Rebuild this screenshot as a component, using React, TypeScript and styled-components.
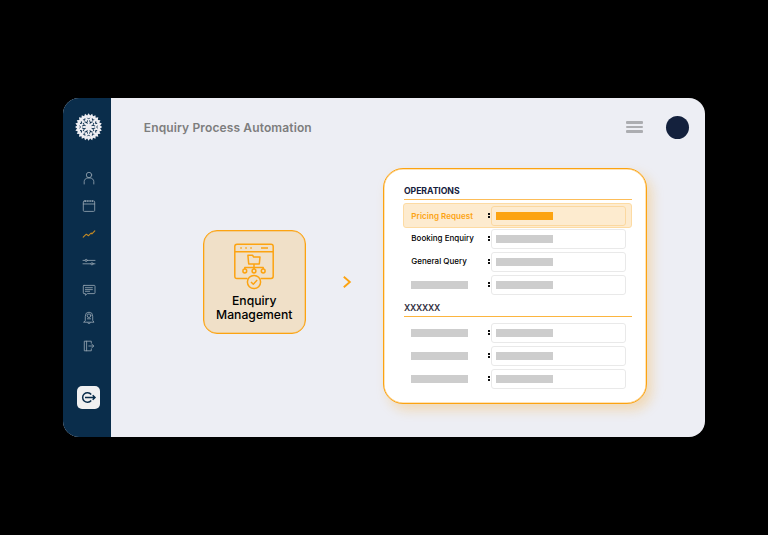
import React from "react";
import styled, { createGlobalStyle, css } from "styled-components";

const ORANGE = "#fca311";
const NAVY = "#14213d";

const GlobalStyle = createGlobalStyle`
  * { box-sizing: border-box; }
  body { margin: 0; background: #000; font-family: Inter, "Liberation Sans", sans-serif; }
`;

const Page = styled.main`
  width: 768px;
  height: 535px;
  padding: 98px 63px;
  background: #000;
`;

const Window = styled.div`
  display: flex;
  width: 642px;
  height: 339px;
  border-radius: 16px;
  overflow: hidden;
  background: #edeef4;
`;

const Sidebar = styled.nav`
  display: flex;
  flex-direction: column;
  align-items: center;
  width: 48.4px;
  padding: 15px 0 0 3px;
  background: #0a2d4b;
  flex-shrink: 0;
`;

const Logo = styled.svg`
  width: 28px;
  height: 28px;
  flex-shrink: 0;
`;

const NavList = styled.div`
  display: flex;
  flex-direction: column;
  gap: 14px;
  margin-top: 30px;
`;

const NavIcon = styled.svg<{ $active?: boolean }>`
  display: block;
  width: 14px;
  height: 14px;
  fill: none;
  stroke: ${(p) => (p.$active ? "#c48a24" : "#93a3b0")};
  stroke-width: 0.85;
  stroke-linecap: round;
  stroke-linejoin: round;
`;

const ExitButton = styled.button`
  display: grid;
  place-items: center;
  width: 23px;
  height: 23px;
  margin: 33px 1px 0 0;
  padding: 0;
  border: 0;
  border-radius: 5px;
  background: #f0f0f1;
`;

const Main = styled.div`
  flex: 1;
  display: flex;
  flex-direction: column;
`;

const Header = styled.header`
  display: flex;
  align-items: center;
  height: 58px;
  padding: 0 16.4px 0 32.4px;
`;

const Title = styled.h1`
  flex: 1;
  margin: 0;
  padding-top: 1px;
  font-size: 12px;
  line-height: 16px;
  font-weight: 600;
  letter-spacing: 0.13px;
  color: #7d7d7d;
`;

const Menu = styled.div`
  display: flex;
  flex-direction: column;
  gap: 2px;
  width: 17px;
  margin-right: 22.5px;
`;

const MenuBar = styled.span`
  height: 2.5px;
  border-radius: 1px;
  background: #acadb1;
`;

const Avatar = styled.div`
  width: 23px;
  height: 23px;
  border-radius: 50%;
  background: ${NAVY};
`;

const Flow = styled.section`
  display: flex;
  align-items: flex-start;
  padding: 12px 0 0 91.4px;
`;

const ProcessCard = styled.div`
  display: flex;
  flex-direction: column;
  align-items: center;
  width: 103px;
  height: 104px;
  margin-top: 62px;
  padding-top: 11px;
  border: 1px solid ${ORANGE};
  border-radius: 14px;
  background: #f0e0c8;
  box-shadow: inset 0 0 0 0.5px rgba(252, 163, 17, 0.6);
`;

const ProcessLabel = styled.div`
  margin-top: 4px;
  font-size: 12.2px;
  line-height: 14px;
  font-weight: 500;
  text-align: center;
  color: #000;
`;

const Arrow = styled.svg`
  width: 10px;
  height: 14px;
  margin: 107px 31px 0 36px;
  fill: none;
  stroke: ${ORANGE};
  stroke-width: 1.9;
`;

const Panel = styled.div`
  width: 264px;
  height: 236px;
  padding: 17px 14.2px 0 19.2px;
  border: 1px solid ${ORANGE};
  border-radius: 20px;
  background: #fff;
  box-shadow: inset 0 0 0 0.5px rgba(252, 163, 17, 0.6), 5px 6px 12px rgba(252, 163, 17, 0.27);
`;

const GroupTitle = styled.h2<{ $muted?: boolean }>`
  width: 228px;
  height: 14px;
  margin: ${(p) => (p.$muted ? "7px" : "0")} 0 0 1px;
  border-bottom: 1px solid ${(p) => (p.$muted ? "#fcb53f" : "#fdbd58")};
  font-size: 8.7px;
  line-height: 11px;
  font-weight: ${(p) => (p.$muted ? 600 : 700)};
  letter-spacing: ${(p) => (p.$muted ? "-0.25px" : "-0.07px")};
  color: ${(p) => (p.$muted ? "#303040" : NAVY)};
`;

const Rows = styled.div`
  padding-top: 4px;
`;

const Field = styled.div`
  display: flex;
  align-items: center;
  width: 135px;
  height: 20px;
  padding-left: 4.2px;
  border: 1px solid #e9e9e9;
  border-radius: 3px;
`;

const Bar = styled.span<{ $active?: boolean }>`
  display: block;
  width: 57px;
  height: 8px;
  background: ${(p) => (p.$active ? ORANGE : "#cdcdcd")};
`;

const Label = styled.div<{ $text?: boolean }>`
  width: 76.7px;
  padding-left: ${(p) => (p.$text ? "0.4px" : "0")};
  padding-bottom: ${(p) => (p.$text ? "2px" : "0")};
  font-size: 8px;
  line-height: 12px;
  font-weight: 500;
  color: #000;
  white-space: nowrap;
`;

const Colon = styled.span`
  display: flex;
  flex-direction: column;
  gap: 1.4px;
  width: 3.3px;
  &::before, &::after {
    content: "";
    width: 2px;
    height: 1.8px;
    background: #111;
  }
`;

const Row = styled.div<{ $active?: boolean }>`
  display: flex;
  align-items: center;
  height: 23px;
  padding-left: 8px;
  ${(p) =>
    p.$active &&
    css`
      width: 229px;
      height: 25px;
      margin: -1px 0;
      padding-left: 7px;
      border: 1px solid #fddba3;
      border-radius: 3px;
      background: #fdebcf;
      ${Label} { color: ${ORANGE}; font-weight: 600; letter-spacing: 0.06px; padding-bottom: 0; }
      ${Field} { border-color: #fbd8a0; }
    `}
`;

const teeth = Array.from({ length: 48 }, (_, i) => {
  const a = (i * Math.PI) / 24;
  const r = i % 2 ? 11.6 : 13.7;
  return `${13.6 + r * Math.cos(a)},${14 + r * Math.sin(a)}`;
}).join(" ");

function Crest() {
  return (
    <Logo viewBox="0 0 28 28">
      <polygon points={teeth} fill="#eeeef3" />
      <g fill="none" stroke="#0a2d4b" strokeWidth="0.9" transform="translate(-.4 0)">
        {Array.from({ length: 12 }, (_, i) => (
          <path key={i} transform={`rotate(${i * 30} 14 14)`} d="M12.8 4.8l1.2 1.3 1.2-1.3" />
        ))}
        {Array.from({ length: 8 }, (_, i) => (
          <path key={i} transform={`rotate(${i * 45 + 22.5} 14 14)`} d="M12.3 7.6L14 9.3l1.7-1.7M14 9.3v1.4" />
        ))}
      </g>
    </Logo>
  );
}

const navIcons = [
  <><circle cx="7" cy="4" r="2.7" /><path d="M2.2 13V10.5C2.2 8.5 4 7.4 5 7h4c1 .4 2.8 1.5 2.8 3.5V13" /></>,
  <><rect x="1.3" y="2" width="11.4" height="10.4" rx="1" /><path d="M1.3 5h11.4M3.5 1.6v1M5.8 1.6v1M8.2 1.6v1M10.5 1.6v1" /></>,
  <path d="M1.2 10.2l3.1-3 2.3 1.5L9.1 6l.8.8 2.9-3" strokeWidth="1.1" />,
  <><path d="M1 5.4h2M5.4 5.4H13M1 8.8h7.8M11.2 8.8H13" /><circle cx="4.2" cy="5.4" r="1.1" /><circle cx="10" cy="8.8" r="1.1" /></>,
  <><path d="M2 2.4h10.3q.7 0 .7.7v6.8q0 .7-.7.7H5.3L3.4 12.3v-1.7H2q-.7 0-.7-.7V3.1q0-.7.7-.7z" /><path d="M3.4 4.7h7M3.4 6.6h7M3.4 8.3h4.2" /></>,
  <><path d="M3.3 9.4V5.2a3.7 4 0 0 1 7.4 0V9.4l1.3 1.8H2zM5.7 12q1.3 1.6 2.6 0" /><circle cx="7" cy="4.7" r="1.8" /><path d="M5.4 7.8h3.2" /></>,
  <><path d="M9.3 4.2V2.2H2.3v9.6h7V9.8M4.6 2.2v9.6" /><path d="M6.8 7h4.8M10 5.3L11.7 7 10 8.7" /></>,
];

function ProcessIcon() {
  return (
    <svg width="42" height="48" viewBox="0 0 42 48" fill="none" stroke={ORANGE} strokeWidth="1.5" strokeLinejoin="round">
      <path d="M14.5 36.5H4q-2.2 0-2.2-2.2V4.5Q1.8 2.3 4 2.3h34q2.2 0 2.2 2.2v29.8q0 2.2-2.2 2.2H27.5M1.8 9.8h38.4" />
      <path d="M7.3 6h1.5M12.3 6h1.5M17.3 6h1.5M28 6h7" />
      <path d="M14.9 13.3h4.6l1.2 1.7h6.3l-.7 7H15.7zM21 22v5M11.8 27v-1.6h18.4V27" />
      <circle cx="11.8" cy="29" r="1.9" />
      <circle cx="21" cy="29" r="1.9" />
      <circle cx="30.2" cy="29" r="1.9" />
      <circle cx="21" cy="40" r="6.6" fill="#f0e0c8" />
      <path d="M18 40l2.3 2.2 3.9-4.1" />
    </svg>
  );
}

type Item = { label?: string; active?: boolean };

function ItemRow({ label, active }: Item) {
  return (
    <Row $active={active}>
      <Label $text={Boolean(label)}>{label ?? <Bar />}</Label>
      <Colon />
      <Field><Bar $active={active} /></Field>
    </Row>
  );
}

const operations: Item[] = [
  { label: "Pricing Request", active: true },
  { label: "Booking Enquiry" },
  { label: "General Query" },
  {},
];

export default function App() {
  return (
    <Page>
      <GlobalStyle />
      <Window>
        <Sidebar>
          <Crest />
          <NavList>
            {navIcons.map((icon, i) => (
              <NavIcon key={i} viewBox="0 0 14 14" $active={i === 2}>{icon}</NavIcon>
            ))}
          </NavList>
          <ExitButton aria-label="Sign out">
            <svg width="17" height="15" viewBox="0 0 17 15" fill="none" stroke="#0a2d4b" strokeWidth="1.5">
              <path d="M11.2 4.5A4.8 4.8 0 1 0 11.2 10.5M5 7.5h9.5M12.7 5.2L15 7.5l-2.3 2.3" />
            </svg>
          </ExitButton>
        </Sidebar>
        <Main>
          <Header>
            <Title>Enquiry Process Automation</Title>
            <Menu><MenuBar /><MenuBar /><MenuBar /></Menu>
            <Avatar />
          </Header>
          <Flow>
            <ProcessCard>
              <ProcessIcon />
              <ProcessLabel>Enquiry<br />Management</ProcessLabel>
            </ProcessCard>
            <Arrow viewBox="0 0 10 14"><path d="M1.8 1.8L7.8 7l-6 5.2" /></Arrow>
            <Panel>
              <GroupTitle>OPERATIONS</GroupTitle>
              <Rows>
                {operations.map((item, i) => <ItemRow key={i} {...item} />)}
              </Rows>
              <GroupTitle $muted>XXXXXX</GroupTitle>
              <Rows>
                <ItemRow /><ItemRow /><ItemRow />
              </Rows>
            </Panel>
          </Flow>
        </Main>
      </Window>
    </Page>
  );
}
